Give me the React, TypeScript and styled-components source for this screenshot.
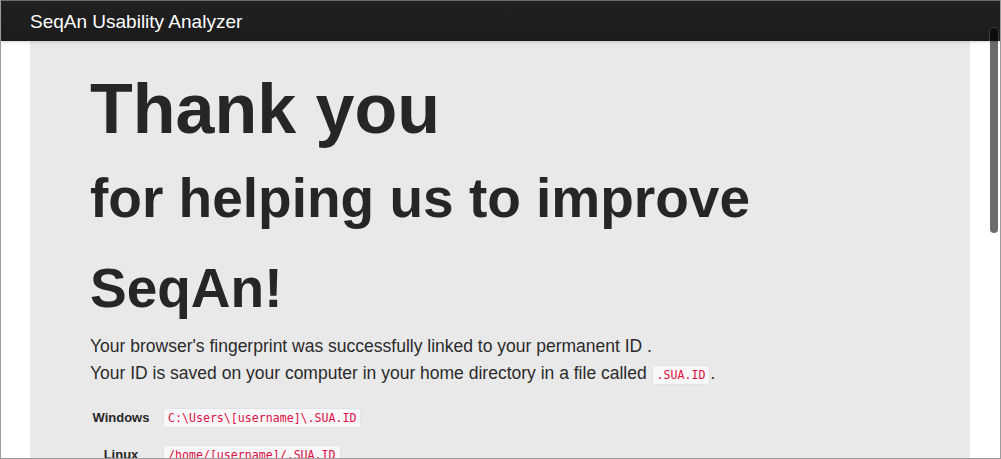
import React from "react";
import styled, { createGlobalStyle } from "styled-components";

const Global = createGlobalStyle`
  html, body { margin: 0; padding: 0; background: #fff; }
  body { font-family: "Liberation Sans", Arial, Helvetica, sans-serif; }
  *, *::before, *::after { box-sizing: border-box; }
`;

const Frame = styled.div`
  position: relative;
  width: 1001px;
  height: 459px;
  border-left: 1px solid #9c9c9c;
  border-right: 1px solid #9c9c9c;
  border-bottom: 1px solid #9c9c9c;
  overflow: hidden;
  display: flex;
  flex-direction: column;
  background: #fff;
`;

const Navbar = styled.header`
  flex: none;
  height: 41px;
  border-top: 1px solid #6f6f6f;
  background: linear-gradient(#212121, #1b1b1b);
  box-shadow: 0 1px 3px rgba(0, 0, 0, 0.18);
  position: relative;
  z-index: 1;
  display: flex;
  align-items: center;
  padding-left: 29px;
`;

const Brand = styled.span`
  color: #fff;
  font-size: 19px;
  line-height: 24px;
  padding-top: 1px;
`;

const Main = styled.main`
  flex: 1;
  display: flex;
  padding-left: 29px;
  overflow: hidden;
`;

const Hero = styled.section`
  width: 940px;
  flex: none;
  background: #e9e9e9;
  padding: 33px 60px 0;
  color: #262626;
`;

const Title = styled.h1`
  margin: 0;
  font-size: 70px;
  line-height: 70px;
  font-weight: bold;
`;

const Subtitle = styled.h2`
  margin: 9px 0 0;
  font-size: 55px;
  line-height: 90px;
  font-weight: bold;
`;

const Lead = styled.p`
  margin: 0;
  font-size: 17.5px;
  line-height: 27px;
  color: #2b2b2b;
`;

const Code = styled.code`
  font-family: "DejaVu Sans Mono", Menlo, monospace;
  font-size: 11.6px;
  color: #dd1144;
  background: #f7f7f9;
  border: 1px solid #e1e1e8;
  border-radius: 3px;
  padding: 2px 4px;
`;

const PathTable = styled.div`
  display: grid;
  grid-template-columns: 62px auto;
  grid-auto-rows: 37px;
  align-items: center;
  justify-items: start;
  margin-top: 10px;
`;

const OsLabel = styled.span`
  justify-self: center;
  font-size: 13px;
  font-weight: bold;
  color: #262626;
`;

const PathCell = styled.span`
  margin-left: 11px;
  line-height: 19px;
`;

const ScrollThumb = styled.div`
  position: absolute;
  right: 2px;
  top: 28px;
  width: 8px;
  height: 205px;
  border-radius: 4px;
  background: rgba(0, 0, 0, 0.58);
  box-shadow: 0 0 0 1px rgba(255, 255, 255, 0.15);
  z-index: 2;
`;

const paths = [
  { os: "Windows", path: "C:\\Users\\[username]\\.SUA.ID" },
  { os: "Linux", path: "/home/[username]/.SUA.ID" },
];

export default function App() {
  return (
    <>
      <Global />
      <Frame>
        <Navbar>
          <Brand>SeqAn Usability Analyzer</Brand>
        </Navbar>
        <Main>
          <Hero>
            <Title>Thank you</Title>
            <Subtitle>for helping us to improve SeqAn!</Subtitle>
            <Lead>
              Your browser's fingerprint was successfully linked to your permanent ID .
              <br />
              Your ID is saved on your computer in your home directory in a file called{" "}
              <Code>.SUA.ID</Code>.
            </Lead>
            <PathTable>
              {paths.map((p) => (
                <React.Fragment key={p.os}>
                  <OsLabel>{p.os}</OsLabel>
                  <PathCell>
                    <Code>{p.path}</Code>
                  </PathCell>
                </React.Fragment>
              ))}
            </PathTable>
          </Hero>
        </Main>
        <ScrollThumb />
      </Frame>
    </>
  );
}
